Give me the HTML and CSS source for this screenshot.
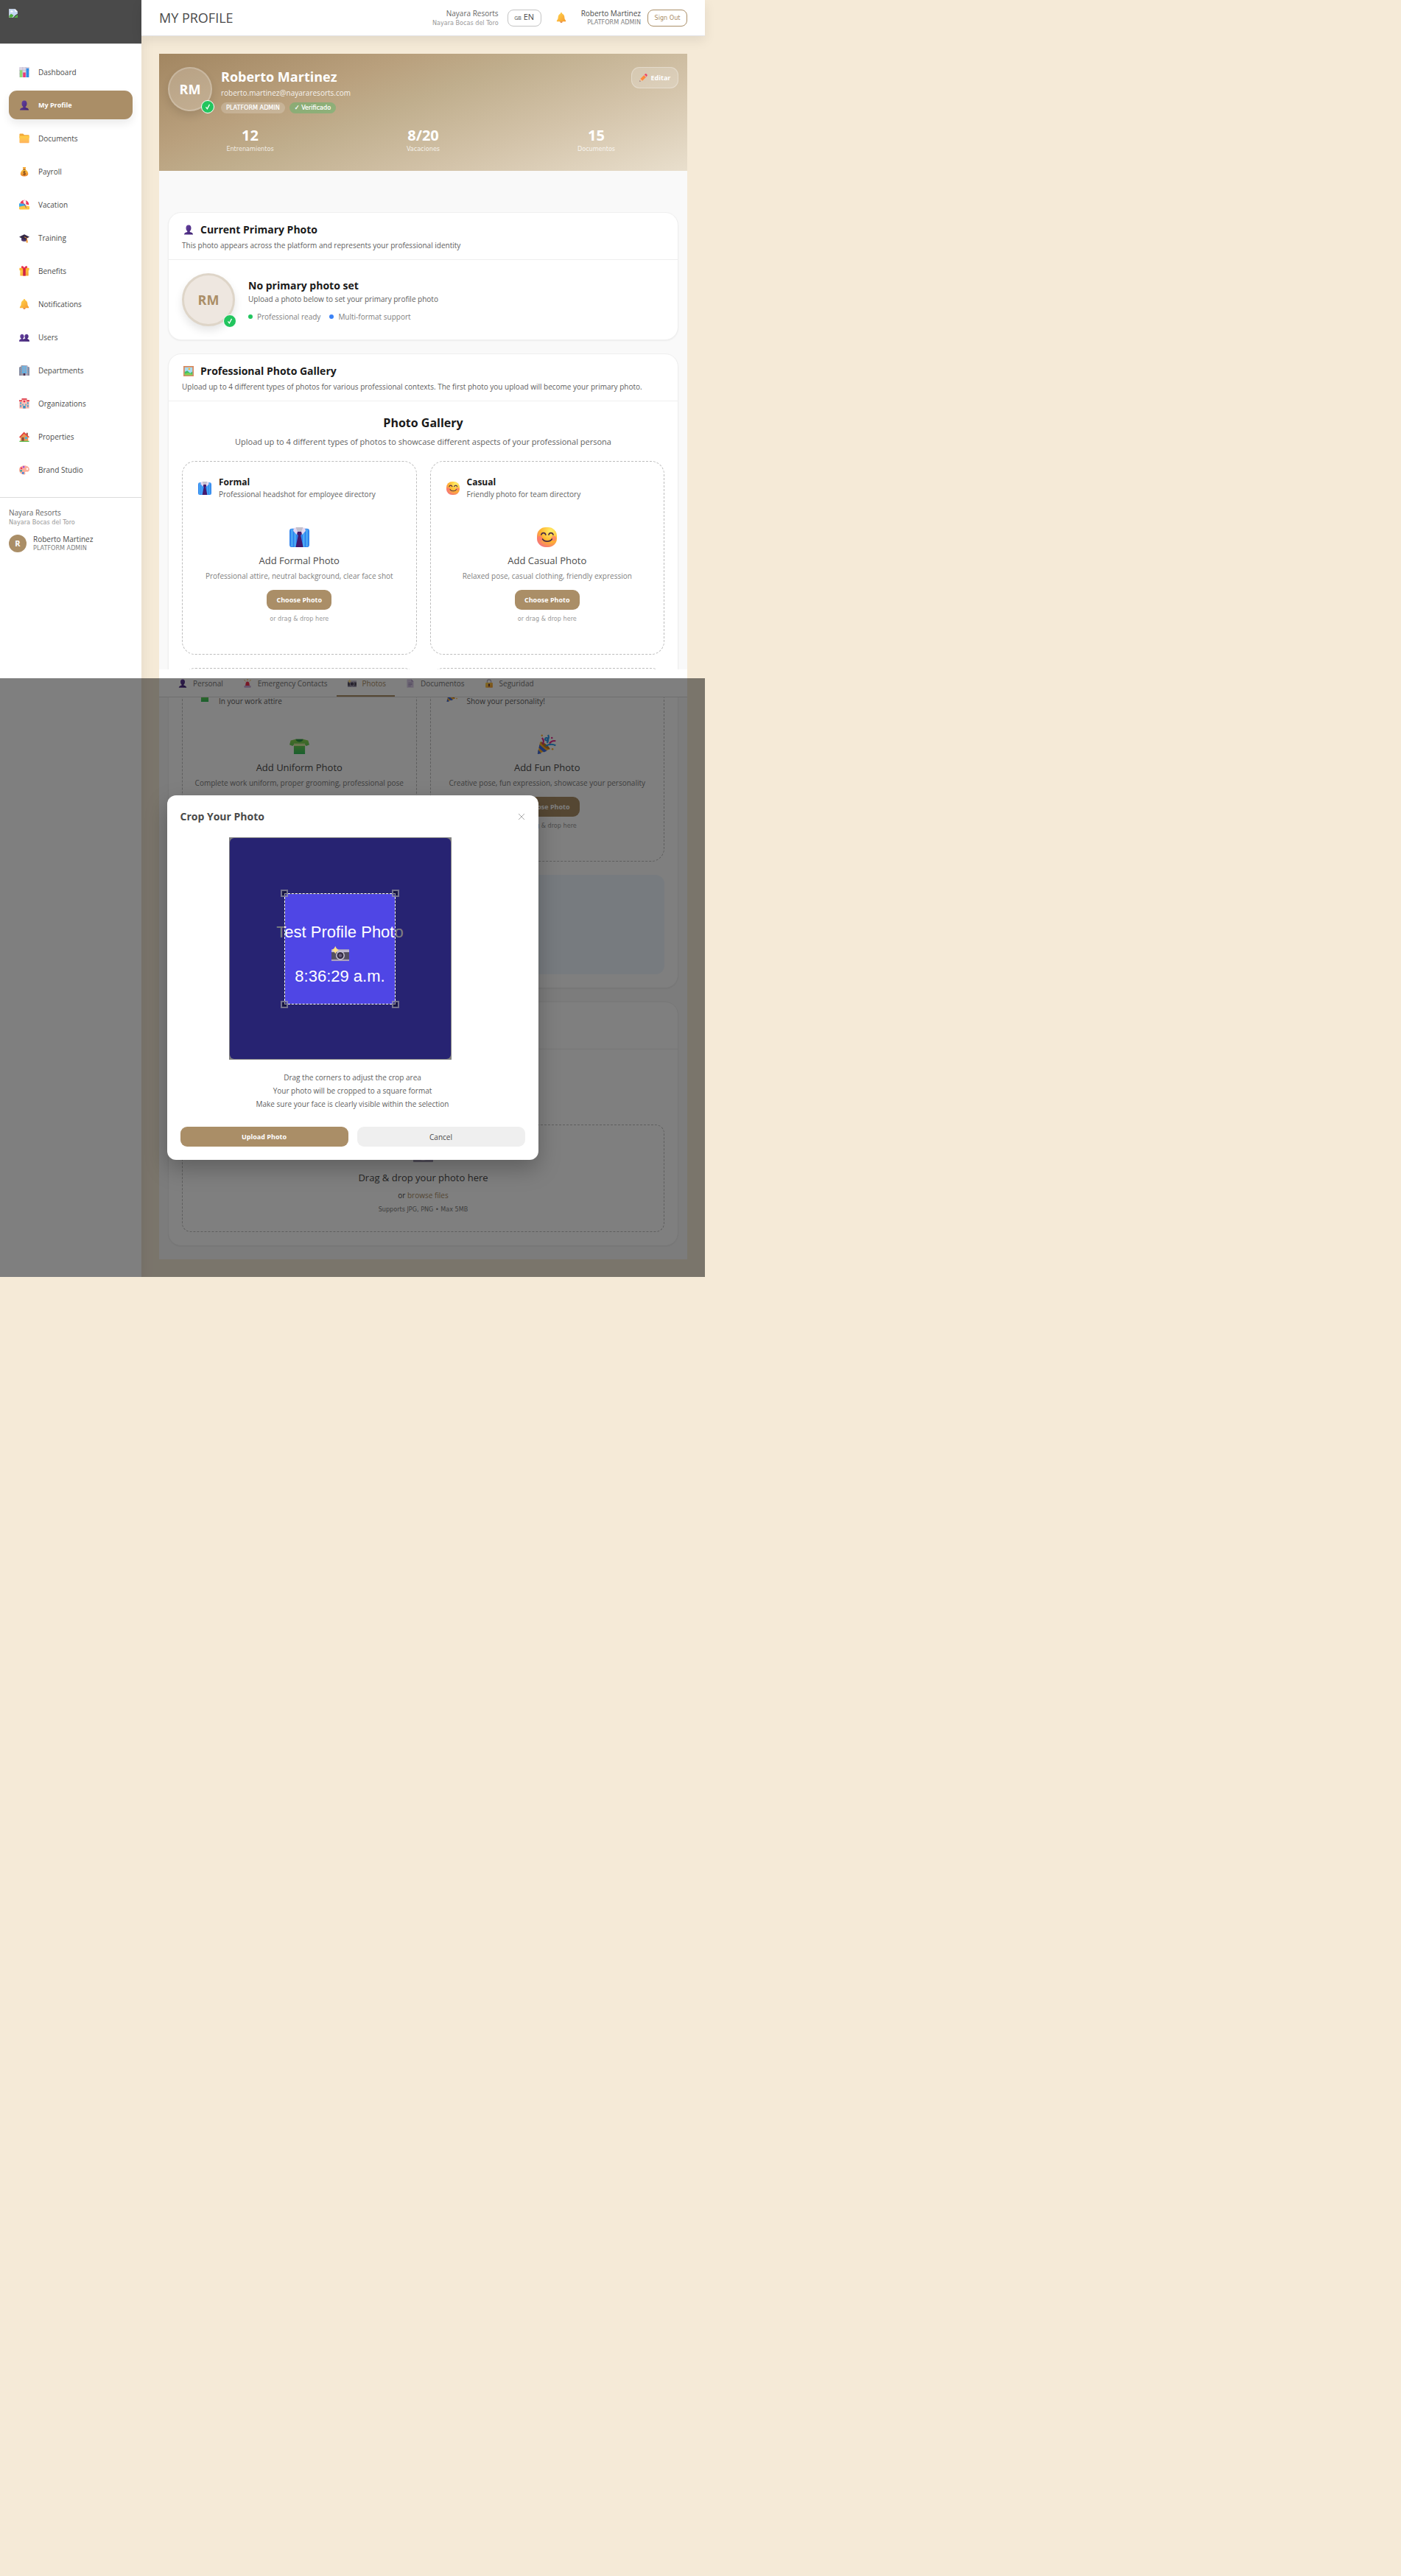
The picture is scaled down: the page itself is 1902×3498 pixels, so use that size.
FILE: index.html
```html
<!DOCTYPE html>
<html lang="en">
<head>
<meta charset="utf-8">
<meta name="viewport" content="width=device-width, initial-scale=1">
<title>My Profile</title>
<link rel="stylesheet" href="styles.css">
</head>
<body>
<svg class="sprite" aria-hidden="true">
  <defs>
    <linearGradient id="gold" x1="0" y1="0" x2="1" y2="1"><stop offset="0" stop-color="#ffd84f"/><stop offset="1" stop-color="#f79a2e"/></linearGradient>
    <linearGradient id="purple" x1="0" y1="0" x2="1" y2="1"><stop offset="0" stop-color="#6b45a5"/><stop offset="1" stop-color="#3c2070"/></linearGradient>
    <linearGradient id="folderFill" x1="0" y1="0" x2="0" y2="1"><stop offset="0" stop-color="#ffcf45"/><stop offset="1" stop-color="#ffb45f"/></linearGradient>
    <linearGradient id="sack" x1="0" y1="0" x2="0" y2="1"><stop offset="0" stop-color="#ffc83d"/><stop offset="1" stop-color="#e8822e"/></linearGradient>
    <linearGradient id="green" x1="0" y1="0" x2="0" y2="1"><stop offset="0" stop-color="#8fd84f"/><stop offset="1" stop-color="#35c05c"/></linearGradient>
    <radialGradient id="face" cx=".7" cy=".2" r=".95"><stop offset="0" stop-color="#fff06a"/><stop offset=".55" stop-color="#ffb52e"/><stop offset="1" stop-color="#f2668b"/></radialGradient>
    <linearGradient id="glass" x1="0" y1="0" x2="1" y2="0"><stop offset="0" stop-color="#9a9aa8"/><stop offset="1" stop-color="#b9b5c6"/></linearGradient>
  </defs>
  <symbol id="i-chart" viewBox="0 0 32 32"><rect width="32" height="32" rx="2" fill="#dcd6e4"/><path d="M0 10h32M0 21h32M11 0v32M21 0v32" stroke="#bdb4cc" stroke-width="1.5"/><rect x="2" y="10" width="8" height="22" fill="#8fdc72"/><rect x="12" y="17" width="8" height="15" fill="#ea3a77"/><rect x="22" y="4" width="8" height="28" fill="#2f8de8"/></symbol>
  <symbol id="i-user" viewBox="0 0 32 32"><path d="M16 1c6 0 8 4 8 9 0 4-1 8-4 10v3c5 1 9 3 10 8H2c1-5 5-7 10-8v-3c-3-2-4-6-4-10 0-5 2-9 8-9z" fill="url(#purple)"/></symbol>
  <symbol id="i-users" viewBox="0 0 32 32"><path d="M9 6c4 0 6 3 6 7 0 3-1 5-3 6v2c3 1 5 3 5 8H0c0-5 2-7 6-8v-2c-2-1-3-3-3-6 0-4 2-7 6-7zM23 6c4 0 6 3 6 7 0 3-1 5-3 6v2c4 1 6 3 6 8H17c0-4-1-6-3-8l6-2c-2-1-3-3-3-6 0-4 2-7 6-7z" fill="url(#purple)"/></symbol>
  <symbol id="i-folder" viewBox="0 0 32 32"><path d="M1 3q0-2 2-2h9l4 4h13q2 0 2 2v8H1z" fill="#f2a83a"/><rect x="1" y="8" width="30" height="22" rx="2" fill="url(#folderFill)"/></symbol>
  <symbol id="i-money" viewBox="0 0 32 32"><path d="M11 2h10l-2 8h-6z" fill="#f3a531"/><path d="M13 9h6c5 3 9 8 9 14 0 5-4 8-12 8S4 28 4 23c0-6 4-11 9-14z" fill="url(#sack)"/><path d="M12 10h8" stroke="#8b4a1d" stroke-width="2"/><path d="M20 17c-2-2-7-2-7 1s7 2 7 5-5 3-8 1M16 14v14" fill="none" stroke="#6f3b1a" stroke-width="2"/></symbol>
  <symbol id="i-beach" viewBox="0 0 32 32"><path d="M0 12h16l10 12H0z" fill="#37a7ea"/><path d="M0 22l20-4 12 3v7q0 3-3 3H3q-3 0-3-3z" fill="#ffc545"/><path d="M14 10l8 16" stroke="#7b4b86" stroke-width="2"/><path d="M3 12C4 4 12 0 20 2c7 2 11 8 10 15L17 13z" fill="#ef3b5c"/><path d="M13 3c3-1 5-1 7-1 2 4 2 7 1 12l-5-1c-3-3-4-6-3-10z" fill="#fff1f3"/></symbol>
  <symbol id="i-cap" viewBox="0 0 32 32"><path d="M7 14h18v10c-4 4-14 4-18 0z" fill="#4a3568"/><path d="M0 13L16 5l16 8-16 8z" fill="#352a48"/><path d="M16 13l8 4v8" fill="none" stroke="#f79a2e" stroke-width="2"/><path d="M22 23h4l1 8h-5z" fill="#f79a2e"/></symbol>
  <symbol id="i-gift" viewBox="0 0 32 32"><rect x="3" y="10" width="26" height="21" rx="2" fill="url(#gold)"/><rect x="1" y="6" width="30" height="8" rx="1" fill="#ffb52e"/><rect x="12" y="6" width="8" height="25" fill="#cf2147"/><path d="M16 8C9 9 5 6 7 2c3-3 8 0 9 6 1-6 6-9 9-6 2 4-2 7-9 6z" fill="#e8304f"/></symbol>
  <symbol id="i-bell" viewBox="0 0 32 32"><path d="M16 0c3 0 3 3 3 4 5 2 7 6 7 12 0 4 2 6 4 9v3H2v-3c2-3 4-5 4-9 0-6 2-10 7-12 0-1 0-4 3-4z" fill="url(#gold)"/><path d="M12 28h8c0 5-8 5-8 0z" fill="#e0792b"/></symbol>
  <symbol id="i-office" viewBox="0 0 32 32"><path d="M0 6l8-3v29H0zM24 3l8 3v26h-8z" fill="#8c8a9c"/><rect x="6" width="20" height="32" fill="url(#glass)"/><path d="M9 3h14v22H9z" fill="#4fb7f2"/><path d="M9 8h14M9 13h14M9 18h14M14 3v22M18 3v22" stroke="#a8a6b8" stroke-width="1.5"/><rect x="13" y="25" width="6" height="7" fill="#4a3050"/><path d="M2 11h3M2 17h3M2 23h3M27 11h3M27 17h3M27 23h3" stroke="#4fb7f2" stroke-width="2"/></symbol>
  <symbol id="i-hotel" viewBox="0 0 32 32"><rect x="1" y="7" width="30" height="24" fill="#f9aaa0"/><rect x="8" y="2" width="16" height="29" fill="#ffc3b5"/><path d="M0 5h9v4H0zM23 5h9v4h-9zM8 0h16v4H8z" fill="#dd3b4b"/><path d="M3 12h4v5H3zM3 21h4v5H3zM25 12h4v5h-4zM25 21h4v5h-4zM10 17h3v5h-3zM19 17h3v5h-3z" fill="#2fa4d8"/><path d="M16 13c-4-4-5-6-2-7l2 1 2-1c3 1 2 3-2 7z" fill="#e62e52"/><rect x="12" y="23" width="8" height="8" fill="#3c8fbf"/></symbol>
  <symbol id="i-house" viewBox="0 0 32 32"><rect x="22" y="4" width="5" height="9" fill="#9c5a46"/><path d="M4 15L15 5l13 11v14H4z" fill="#e89a54"/><path d="M0 17L15 1l17 16-3 2L15 7 3 20z" fill="#e5433d"/><rect x="8" y="18" width="7" height="12" fill="#8b4a3c"/><rect x="18" y="17" width="7" height="6" fill="#3fb0e6"/><rect x="1" y="29" width="30" height="3" fill="#5cbf4e"/></symbol>
  <symbol id="i-palette" viewBox="0 0 32 32"><path d="M16 3c9 0 16 5 16 12 0 5-4 8-9 7-4-1-6 1-4 4 1 3-1 5-4 5C6 30 0 24 0 16S7 3 16 3z" fill="#fbb09c"/><circle cx="7" cy="11" r="3" fill="#e8386c"/><circle cx="14" cy="7" r="3" fill="#9d4fe0"/><circle cx="6" cy="19" r="3" fill="#2aa6a0"/><circle cx="12" cy="26" r="3" fill="#2e80e8"/><circle cx="25" cy="13" r="3" fill="#fff"/></symbol>
  <symbol id="i-frame" viewBox="0 0 32 32"><rect width="32" height="32" fill="#d98a5e"/><rect x="4" y="4" width="24" height="24" fill="#a5dcf4"/><circle cx="18" cy="9" r="3" fill="#ffb52e"/><path d="M4 18l8-4 9 8 7-5v11H4z" fill="#3fbf6a"/><path d="M4 24l10-3 14 4v3H4z" fill="#84d24c"/></symbol>
  <symbol id="i-tie" viewBox="0 0 32 32"><rect y="2" width="32" height="30" rx="4" fill="#3285ee"/><path d="M4 3v28M9 8v24M23 8v24M28 3v28" stroke="#55b9f7" stroke-width="2"/><path d="M7 1h18l1 5-6 6-4-4-4 4-6-6z" fill="#e5d9f2"/><path d="M10 0h12l-3 7h-6z" fill="#c4bfcc"/><path d="M13 7h6l1 4-2 2 4 19H10l4-19-2-2z" fill="#45186b"/></symbol>
  <symbol id="i-smile" viewBox="0 0 32 32"><rect width="32" height="32" rx="14" fill="url(#face)"/><circle cx="5" cy="18" r="4" fill="#ff6d7a" opacity=".6"/><circle cx="27" cy="18" r="4" fill="#ff6d7a" opacity=".6"/><path d="M7 12c1-4 6-4 7 0M19 12c1-4 6-4 7 0M9 19c3 5 12 5 15 0" fill="none" stroke="#4a2b45" stroke-width="2" stroke-linecap="round"/></symbol>
  <symbol id="i-shirt" viewBox="0 0 32 32"><path d="M10 8h12l8 2 2 7-5 2-2-2v15H7V17l-2 2-5-2 2-7z" fill="url(#green)"/><path d="M7 15h18v4H7z" fill="#d9eaa0"/><path d="M10 8h12c-1 6-11 6-12 0z" fill="#2c9446"/></symbol>
  <symbol id="i-party" viewBox="0 0 32 32"><path d="M5 12l16 12L1 32z" fill="#ffb02e"/><path d="M4 17l12 10-5 2-8-7zM2 25l5 6-6 1z" fill="#3d6be0"/><path d="M6 12c4 0 14 7 15 12-6 0-14-7-15-12z" fill="#c67a22"/><path d="M8 6c3 3 3 7 1 10M20 15c3-4 6-5 10-4" fill="none" stroke="#e22a8c" stroke-width="2.5"/><path d="M14 19c5-3 10-4 16-1M18 1c2 5 0 9-3 9s-2-5 1-4 2 6 0 8" fill="none" stroke="#2a9bea" stroke-width="2.5"/><circle cx="8" cy="2" r="1.5" fill="#ffb02e"/><circle cx="24" cy="6" r="1.5" fill="#e22a8c"/><circle cx="25" cy="24" r="1.5" fill="#ffb02e"/></symbol>
  <symbol id="i-pencil" viewBox="0 0 32 32"><path d="M4 20L20 4l8 8-16 16z" fill="#ff8a3c"/><path d="M20 4l3-3q3-2 6 1t2 6l-3 4z" fill="#ef4766"/><path d="M18 6l2-2 8 8-2 2z" fill="#cfc8da"/><path d="M4 20l8 8-11 3z" fill="#f3c29a"/><path d="M2 27l3 3-4 1z" fill="#45325c"/></symbol>
  <symbol id="i-siren" viewBox="0 0 32 32"><path d="M8 25L10 13q6-7 12 0l2 12z" fill="#f1324e"/><rect x="4" y="24" width="24" height="7" rx="1" fill="#c9a8d8"/><path d="M16 0v6M4 3l5 6M28 3l-5 6" stroke="#f6b64a" stroke-width="2.5"/></symbol>
  <symbol id="i-camera" viewBox="0 0 32 32"><rect y="7" width="32" height="21" rx="1" fill="#555061"/><rect y="7" width="32" height="5" fill="#bfb8cf"/><rect y="25" width="32" height="3" fill="#aaa0bd"/><circle cx="16" cy="18" r="8" fill="#c9c3d6"/><circle cx="16" cy="18" r="6" fill="#352d44"/><circle cx="16" cy="18" r="3" fill="#6b6180"/><path d="M7 1l2 4 4 3-4 3-2 4-2-4-4-3 4-3z" fill="#ffe08a"/></symbol>
  <symbol id="i-doc" viewBox="0 0 32 32"><path d="M4 1h16l8 8v22H4z" fill="#d8cbe6"/><path d="M20 1l8 8h-8z" fill="#a994c4"/><path d="M9 15h14M9 20h14M9 25h9" stroke="#9686b5" stroke-width="2"/></symbol>
  <symbol id="i-lock" viewBox="0 0 32 32"><path d="M9 15V9c0-9 14-9 14 0v6" fill="none" stroke="#b0a9bd" stroke-width="3"/><rect x="3" y="13" width="26" height="18" rx="2" fill="url(#gold)"/><path d="M16 17a3 3 0 012 5v5h-4v-5a3 3 0 012-5z" fill="#4a2b45"/></symbol>
  <symbol id="i-check" viewBox="0 0 32 32"><path d="M8 17l6 8L24 6" fill="none" stroke="currentColor" stroke-width="4"/></symbol>
  <symbol id="i-broken" viewBox="0 0 32 32"><path d="M0 0h22l10 10v7l-9 6-8 9H0z" fill="#c4d6f2"/><path d="M22 0l10 10H22z" fill="#fff"/><path d="M0 32v-6l8-8 9 5-5 9z" fill="#4cae3c"/><path d="M32 21v11H18z" fill="#52b043"/><path d="M6 10q0-4 4-4t5 4v2H6z" fill="#fff"/><path d="M0 0h22l10 10v7M0 0v32h15" fill="none" stroke="#b8b8b8" stroke-width="2"/></symbol>
</svg>

<div class="app">
  <aside class="sidebar">
    <div class="brand"><svg class="icon-12"><use href="#i-broken"/></svg></div>
    <nav class="nav" aria-label="Main">
      <a href="#"><svg class="icon-14"><use href="#i-chart"/></svg>Dashboard</a>
      <a href="#" class="active" aria-current="page"><svg class="icon-14"><use href="#i-user"/></svg>My Profile</a>
      <a href="#"><svg class="icon-14"><use href="#i-folder"/></svg>Documents</a>
      <a href="#"><svg class="icon-14"><use href="#i-money"/></svg>Payroll</a>
      <a href="#"><svg class="icon-14"><use href="#i-beach"/></svg>Vacation</a>
      <a href="#"><svg class="icon-14"><use href="#i-cap"/></svg>Training</a>
      <a href="#"><svg class="icon-14"><use href="#i-gift"/></svg>Benefits</a>
      <a href="#"><svg class="icon-14"><use href="#i-bell"/></svg>Notifications</a>
      <a href="#"><svg class="icon-14"><use href="#i-users"/></svg>Users</a>
      <a href="#"><svg class="icon-14"><use href="#i-office"/></svg>Departments</a>
      <a href="#"><svg class="icon-14"><use href="#i-hotel"/></svg>Organizations</a>
      <a href="#"><svg class="icon-14"><use href="#i-house"/></svg>Properties</a>
      <a href="#"><svg class="icon-14"><use href="#i-palette"/></svg>Brand Studio</a>
    </nav>
    <div class="account">
      <p class="org-name">Nayara Resorts</p>
      <p class="org-site">Nayara Bocas del Toro</p>
      <div class="account-user">
        <span class="initial">R</span>
        <div><p class="user-name">Roberto Martinez</p><p class="user-role">PLATFORM ADMIN</p></div>
      </div>
    </div>
  </aside>

  <div class="page">
    <header class="topbar">
      <h1>MY PROFILE</h1>
      <div class="topbar-block"><p class="org-name">Nayara Resorts</p><p class="org-site">Nayara Bocas del Toro</p></div>
      <button class="lang" type="button"><small>GB</small> EN</button>
      <button class="bell" type="button" aria-label="Notifications"><svg class="icon-14"><use href="#i-bell"/></svg></button>
      <div class="topbar-block"><p class="user-name">Roberto Martinez</p><p class="user-role">PLATFORM ADMIN</p></div>
      <button class="signout" type="button">Sign Out</button>
    </header>

    <main class="main">
      <div class="profile">
        <section class="hero">
          <div class="hero-top">
            <div class="avatar avatar-hero">RM<span class="badge"><svg class="icon-10"><use href="#i-check"/></svg></span></div>
            <div class="hero-info">
              <h2>Roberto Martinez</h2>
              <p>roberto.martinez@nayararesorts.com</p>
              <div class="pills"><span class="pill">PLATFORM ADMIN</span><span class="pill pill-ok">✓ Verificado</span></div>
            </div>
            <button class="edit" type="button"><svg class="icon-11"><use href="#i-pencil"/></svg>Editar</button>
          </div>
          <dl class="stats">
            <div><dd>12</dd><dt>Entrenamientos</dt></div>
            <div><dd>8/20</dd><dt>Vacaciones</dt></div>
            <div><dd>15</dd><dt>Documentos</dt></div>
          </dl>
        </section>

        <nav class="tabs" aria-label="Profile sections">
          <a href="#"><span><svg class="icon-12"><use href="#i-user"/></svg></span>Personal</a>
          <a href="#"><span><svg class="icon-12"><use href="#i-siren"/></svg></span>Emergency Contacts</a>
          <a href="#" class="active"><span><svg class="icon-12"><use href="#i-camera"/></svg></span>Photos</a>
          <a href="#"><span><svg class="icon-12"><use href="#i-doc"/></svg></span>Documentos</a>
          <a href="#"><span><svg class="icon-12"><use href="#i-lock"/></svg></span>Seguridad</a>
        </nav>

        <div class="cards">
          <section class="card">
            <header class="card-head">
              <h3><svg class="icon-14"><use href="#i-user"/></svg>Current Primary Photo</h3>
              <p>This photo appears across the platform and represents your professional identity</p>
            </header>
            <div class="card-body primary">
              <div class="avatar avatar-photo">RM<span class="badge"><svg class="icon-10"><use href="#i-check"/></svg></span></div>
              <div class="primary-text">
                <h4>No primary photo set</h4>
                <p>Upload a photo below to set your primary profile photo</p>
                <ul class="traits"><li>Professional ready</li><li class="blue">Multi-format support</li></ul>
              </div>
            </div>
          </section>

          <section class="card">
            <header class="card-head">
              <h3><svg class="icon-14"><use href="#i-frame"/></svg>Professional Photo Gallery</h3>
              <p>Upload up to 4 different types of photos for various professional contexts. The first photo you upload will become your primary photo.</p>
            </header>
            <div class="card-body">
              <div class="gallery-intro">
                <h3>Photo Gallery</h3>
                <p>Upload up to 4 different types of photos to showcase different aspects of your professional persona</p>
              </div>
              <div class="gallery">
                <article class="slot">
                  <header><svg class="icon-18"><use href="#i-tie"/></svg><div><h4>Formal</h4><p>Professional headshot for employee directory</p></div></header>
                  <svg class="icon-27"><use href="#i-tie"/></svg>
                  <h5>Add Formal Photo</h5>
                  <p class="hint">Professional attire, neutral background, clear face shot</p>
                  <button class="btn" type="button">Choose Photo</button>
                  <small>or drag &amp; drop here</small>
                </article>
                <article class="slot">
                  <header><svg class="icon-18"><use href="#i-smile"/></svg><div><h4>Casual</h4><p>Friendly photo for team directory</p></div></header>
                  <svg class="icon-27"><use href="#i-smile"/></svg>
                  <h5>Add Casual Photo</h5>
                  <p class="hint">Relaxed pose, casual clothing, friendly expression</p>
                  <button class="btn" type="button">Choose Photo</button>
                  <small>or drag &amp; drop here</small>
                </article>
                <article class="slot">
                  <header><svg class="icon-18"><use href="#i-shirt"/></svg><div><h4>Uniform</h4><p>In your work attire</p></div></header>
                  <svg class="icon-27"><use href="#i-shirt"/></svg>
                  <h5>Add Uniform Photo</h5>
                  <p class="hint">Complete work uniform, proper grooming, professional pose</p>
                  <button class="btn" type="button">Choose Photo</button>
                  <small>or drag &amp; drop here</small>
                </article>
                <article class="slot">
                  <header><svg class="icon-18"><use href="#i-party"/></svg><div><h4>Fun</h4><p>Show your personality!</p></div></header>
                  <svg class="icon-27"><use href="#i-party"/></svg>
                  <h5>Add Fun Photo</h5>
                  <p class="hint">Creative pose, fun expression, showcase your personality</p>
                  <button class="btn" type="button">Choose Photo</button>
                  <small>or drag &amp; drop here</small>
                </article>
              </div>
              <div class="tips"></div>
            </div>
          </section>

          <section class="card">
            <header class="card-head"></header>
            <div class="card-body uploader">
              <div class="dropzone">
                <svg class="icon-27"><use href="#i-camera"/></svg>
                <h5>Drag &amp; drop your photo here</h5>
                <p>or <a href="#">browse files</a></p>
                <small>Supports JPG, PNG • Max 5MB</small>
              </div>
            </div>
          </section>
        </div>
      </div>
    </main>
  </div>

  <div class="backdrop">
    <div class="modal" role="dialog" aria-modal="true" aria-labelledby="crop-title">
      <header class="modal-head">
        <h3 id="crop-title">Crop Your Photo</h3>
        <button type="button" aria-label="Close"><svg viewBox="0 0 10 10"><path d="M1 1l8 8M9 1l-8 8" fill="none" stroke="currentColor"/></svg></button>
      </header>
      <div class="stage">
        <div class="photo">
          <p>Test Profile Photo</p>
          <svg><use href="#i-camera"/></svg>
          <p>8:36:29 a.m.</p>
        </div>
        <div class="selection"><i class="handle nw"></i><i class="handle ne"></i><i class="handle sw"></i><i class="handle se"></i></div>
      </div>
      <div class="modal-help">
        <p>Drag the corners to adjust the crop area</p>
        <p>Your photo will be cropped to a square format</p>
        <p>Make sure your face is clearly visible within the selection</p>
      </div>
      <div class="modal-actions">
        <button class="btn" type="button">Upload Photo</button>
        <button class="btn btn-plain" type="button">Cancel</button>
      </div>
    </div>
  </div>
</div>
</body>
</html>
```
FILE: styles.css
```css
:root {
  --brand: #aa8e67;
  --ink: #1a1a1a;
  --text: #4a4a4a;
  --muted: #606060;
  --faint: #808080;
  --small: 9px/12px "DejaVu Sans Condensed", "DejaVu Sans", Tahoma, sans-serif;
}
* { box-sizing: border-box; }
body, h1, h2, h3, h4, h5, p, dl, dd, dt, ul { margin: 0; padding: 0; }
body {
  background: #f5ead7;
  color: var(--text);
  font: 10px/12px "Open Sans", "Noto Sans", Tahoma, sans-serif;
}
button { font: inherit; color: inherit; cursor: pointer; padding: 0; border: 0; background: none; }
a { color: inherit; text-decoration: none; }
svg { display: block; flex: none; }
.sprite { position: absolute; width: 0; height: 0; }
.icon-10 { width: 10px; height: 10px; }
.icon-11 { width: 11px; height: 11px; }
.icon-12 { width: 12px; height: 12px; }
.icon-14 { width: 14px; height: 14px; }
.icon-18 { width: 18px; height: 18px; }
.icon-27 { width: 27px; height: 27px; }

.app {
  position: relative;
  display: grid;
  grid-template-columns: 192px minmax(0, 1fr);
  max-width: 957px;
}

/* Sidebar */
.sidebar { background: #fff; box-shadow: 0 9px 18px rgba(0, 0, 0, .08); }
.brand { height: 60px; padding: 12px; background: #4a4a4a; border-bottom: 1px solid #dcdcdc; }
.nav { display: flex; flex-direction: column; gap: 6px; padding: 18px 12px; }
.nav a { display: flex; align-items: center; gap: 12px; height: 39px; padding: 0 14px; border-radius: 11px; }
.nav .active {
  background: var(--brand);
  color: #fff;
  font-size: 9px;
  font-weight: 700;
  box-shadow: 0 6px 12px rgba(0, 0, 0, .08);
}
.account { padding: 14px 12px; border-top: 1px solid #dcdcdc; }
.org-name { line-height: 13px; color: #666; }
.org-site { font: var(--small); color: #999; }
.user-name { color: var(--text); }
.user-role { font: var(--small); color: var(--faint); }
.account-user { display: flex; gap: 9px; margin-top: 11px; }
.initial {
  display: grid;
  place-items: center;
  width: 24px;
  height: 24px;
  border-radius: 50%;
  background: var(--brand);
  color: #fff;
  font-size: 11px;
  font-weight: 700;
}

/* Top bar */
.topbar {
  display: flex;
  align-items: center;
  gap: 12px;
  height: 49px;
  padding: 0 24px;
  background: #fff;
  border-bottom: 1px solid #e3e3e6;
  box-shadow: 0 6px 15px rgba(0, 0, 0, .08);
}
.topbar h1 { margin-right: auto; font-size: 18px; font-weight: 400; line-height: 24px; }
.topbar-block { text-align: right; }
.lang { width: 46px; height: 23px; border: 1px solid #c4c4c4; border-radius: 8px; font-size: 11px; }
.lang small { font-size: 7px; }
.bell { display: grid; place-items: center; width: 30px; height: 24px; }
.signout {
  width: 54px;
  height: 23px;
  margin-left: -3px;
  border: 1px solid var(--brand);
  border-radius: 8px;
  color: var(--brand);
  font: var(--small);
}

/* Profile */
.main { padding: 24px; }
.profile { position: relative; background: #f9f9f9; }
.hero {
  padding: 18px 12px 24px;
  background: linear-gradient(160deg, #a28661 0%, #b9a07d 30%, #c0ae8d 45%, #d3c3a9 70%, #e9dfcd 100%);
  color: #fff;
}
.hero-top { display: flex; align-items: flex-start; gap: 12px; }
.avatar {
  position: relative;
  display: grid;
  place-items: center;
  flex: none;
  border-radius: 50%;
  font-size: 18px;
  font-weight: 700;
  box-shadow: 0 6px 12px rgba(0, 0, 0, .1);
}
.avatar-hero { width: 60px; height: 60px; border: 2px solid rgba(255, 255, 255, .2); background: rgba(255, 255, 255, .2); }
.avatar-photo { width: 72px; height: 72px; border: 3px solid #ded5c8; background: #eee7e0; color: var(--brand); }
.badge {
  position: absolute;
  right: -5px;
  bottom: -5px;
  display: grid;
  place-items: center;
  width: 18px;
  height: 18px;
  border: 1px solid #fff;
  border-radius: 50%;
  background: #22c55e;
  color: #fff;
}
.hero-info { flex: 1; padding-top: 1px; }
.hero-info h2 { font-size: 18px; line-height: 24px; }
.hero-info p { margin-top: 2px; line-height: 16px; color: rgba(255, 255, 255, .9); }
.pills { display: flex; gap: 6px; margin-top: 5px; }
.pill { padding: 0 7px; border-radius: 8px; background: rgba(255, 255, 255, .2); font: var(--small); line-height: 15px; -webkit-text-stroke: .2px; }
.pill-ok { background: rgba(34, 197, 94, .3); }
.edit {
  display: flex;
  align-items: center;
  justify-content: center;
  gap: 5px;
  width: 64px;
  height: 29px;
  border: 1px solid rgba(255, 255, 255, .3);
  border-radius: 11px;
  background: rgba(255, 255, 255, .2);
  font-size: 9px;
  font-weight: 700;
}
.stats { display: grid; grid-template-columns: repeat(3, 1fr); gap: 12px; margin-top: 18px; text-align: center; }
.stats dd { font-size: 20px; font-weight: 700; line-height: 24px; }
.stats dt { font: var(--small); color: rgba(255, 255, 255, .8); }
.stats div { display: flex; flex-direction: column; }

.tabs {
  position: absolute;
  top: 836px;
  left: 0;
  right: 0;
  display: flex;
  height: 38px;
  padding: 0 11px;
  background: #fff;
  border-bottom: 1px solid #dcdcdc;
  color: #777;
}
.tabs a { display: flex; align-items: center; gap: 5px; padding: 2px 12px 0; border-bottom: 2px solid transparent; }
.tabs span { display: grid; place-items: center; width: 18px; }
.tabs .active { border-color: var(--brand); color: var(--brand); }

/* Cards */
.cards { display: flex; flex-direction: column; gap: 18px; padding: 56px 12px 18px; }
.card { background: #fff; border: 1px solid #efefef; border-radius: 18px; box-shadow: 0 1px 2px rgba(0, 0, 0, .05); }
.card-head { min-height: 64px; padding: 14px 18px 10px; border-bottom: 1px solid #efefef; }
.card-head h3 { display: flex; align-items: center; gap: 9px; padding-left: 2px; color: var(--ink); font-size: 14px; line-height: 18px; }
.card-head p { margin-top: 3px; line-height: 18px; color: var(--muted); }
.card-body { padding: 18px; }
.primary { display: flex; align-items: flex-start; gap: 18px; }
.primary-text { padding-top: 8px; }
.primary h4 { color: var(--ink); font-size: 14px; line-height: 18px; }
.primary p { line-height: 18px; color: var(--muted); }
.traits { display: flex; gap: 12px; margin-top: 6px; list-style: none; color: var(--faint); line-height: 18px; }
.traits li { display: flex; align-items: center; gap: 6px; }
.traits li::before { content: ""; width: 6px; height: 6px; border-radius: 50%; background: #22c55e; }
.traits .blue::before { background: #3b82f6; }

.gallery-intro { text-align: center; }
.gallery-intro h3 { color: var(--ink); font-size: 16px; line-height: 22px; }
.gallery-intro p { margin: 5px 0 16px; font-size: 11px; line-height: 20px; color: var(--muted); }
.gallery { display: grid; grid-template-columns: 1fr 1fr; gap: 18px; }
.slot, .dropzone {
  display: flex;
  flex-direction: column;
  align-items: center;
  border: 1px dashed #bdbdbd;
  border-radius: 18px;
}
.slot { padding: 20px 9px 41px; }
.slot header { display: flex; align-items: center; gap: 10px; align-self: stretch; margin-bottom: 37px; padding: 0 12px; }
.slot h4 { color: var(--ink); font-size: 12px; line-height: 16px; }
.slot header p { line-height: 16px; color: var(--muted); }
h5 { margin-top: 9px; font-size: 13px; line-height: 18px; font-weight: 400; }
.hint { margin: 4px 0 11px; line-height: 16px; color: var(--faint); }
.slot small { margin-top: 5px; font: var(--small); line-height: 14px; color: #999; }
.btn {
  height: 27px;
  padding: 0 13px;
  border-radius: 9px;
  background: var(--brand);
  color: #fff;
  font-size: 9px;
  font-weight: 700;
}
.tips { height: 135px; margin-top: 18px; border-radius: 12px; background: #eff6ff; }
.uploader { padding-top: 102px; }
.dropzone { border-radius: 12px; padding: 26px 18px 23px; }
.dropzone h5, .dropzone p { color: var(--text); }
.dropzone p { margin-top: 6px; line-height: 18px; }
.dropzone a { color: var(--brand); }
.dropzone small { margin-top: 3px; font: var(--small); line-height: 14px; color: var(--faint); }

/* Crop dialog */
.backdrop {
  position: absolute;
  inset: 921px 0 0;
  display: flex;
  align-items: center;
  justify-content: center;
  background: rgba(0, 0, 0, .5);
}
.modal { width: 504px; padding: 18px; border-radius: 12px; background: #fff; box-shadow: 0 12px 30px rgba(0, 0, 0, .25); }
.modal-head { display: flex; align-items: center; justify-content: space-between; height: 21px; }
.modal-head h3 { font-size: 14px; line-height: 21px; }
.modal-head button { width: 10px; height: 10px; color: #aaa; }
.stage { position: relative; width: 302px; margin: 18px 66px 15px; padding: 1px; overflow: hidden; }
.photo {
  display: flex;
  flex-direction: column;
  align-items: center;
  justify-content: center;
  height: 300px;
  padding-top: 16px;
  border-radius: 6px;
  background: #4f46e5;
  color: #fff;
  font: 22px/30px "Liberation Sans", Arial, sans-serif;
}
.photo svg { width: 24px; height: 24px; margin: 3px 0; }
.selection {
  position: absolute;
  top: 76px;
  left: 75px;
  width: 151px;
  height: 151px;
  border: 1px solid #444;
  box-shadow: 0 0 0 400px rgba(0, 0, 0, .5);
}
.selection::before { content: ""; position: absolute; inset: -1px; border: 1px dashed #fff; }
.handle { position: absolute; width: 10px; height: 10px; border: 2px solid rgba(255, 255, 255, .4); background: rgba(0, 0, 0, .4); }
.nw, .ne { top: -6px; }
.sw, .se { bottom: -6px; }
.nw, .sw { left: -6px; }
.ne, .se { right: -6px; }
.modal-help { line-height: 18px; text-align: center; color: var(--muted); }
.modal-actions { display: grid; grid-template-columns: 1fr 1fr; gap: 12px; margin-top: 22px; }
.btn-plain { background: #efefef; color: var(--text); font-size: 10px; font-weight: 400; }
```
